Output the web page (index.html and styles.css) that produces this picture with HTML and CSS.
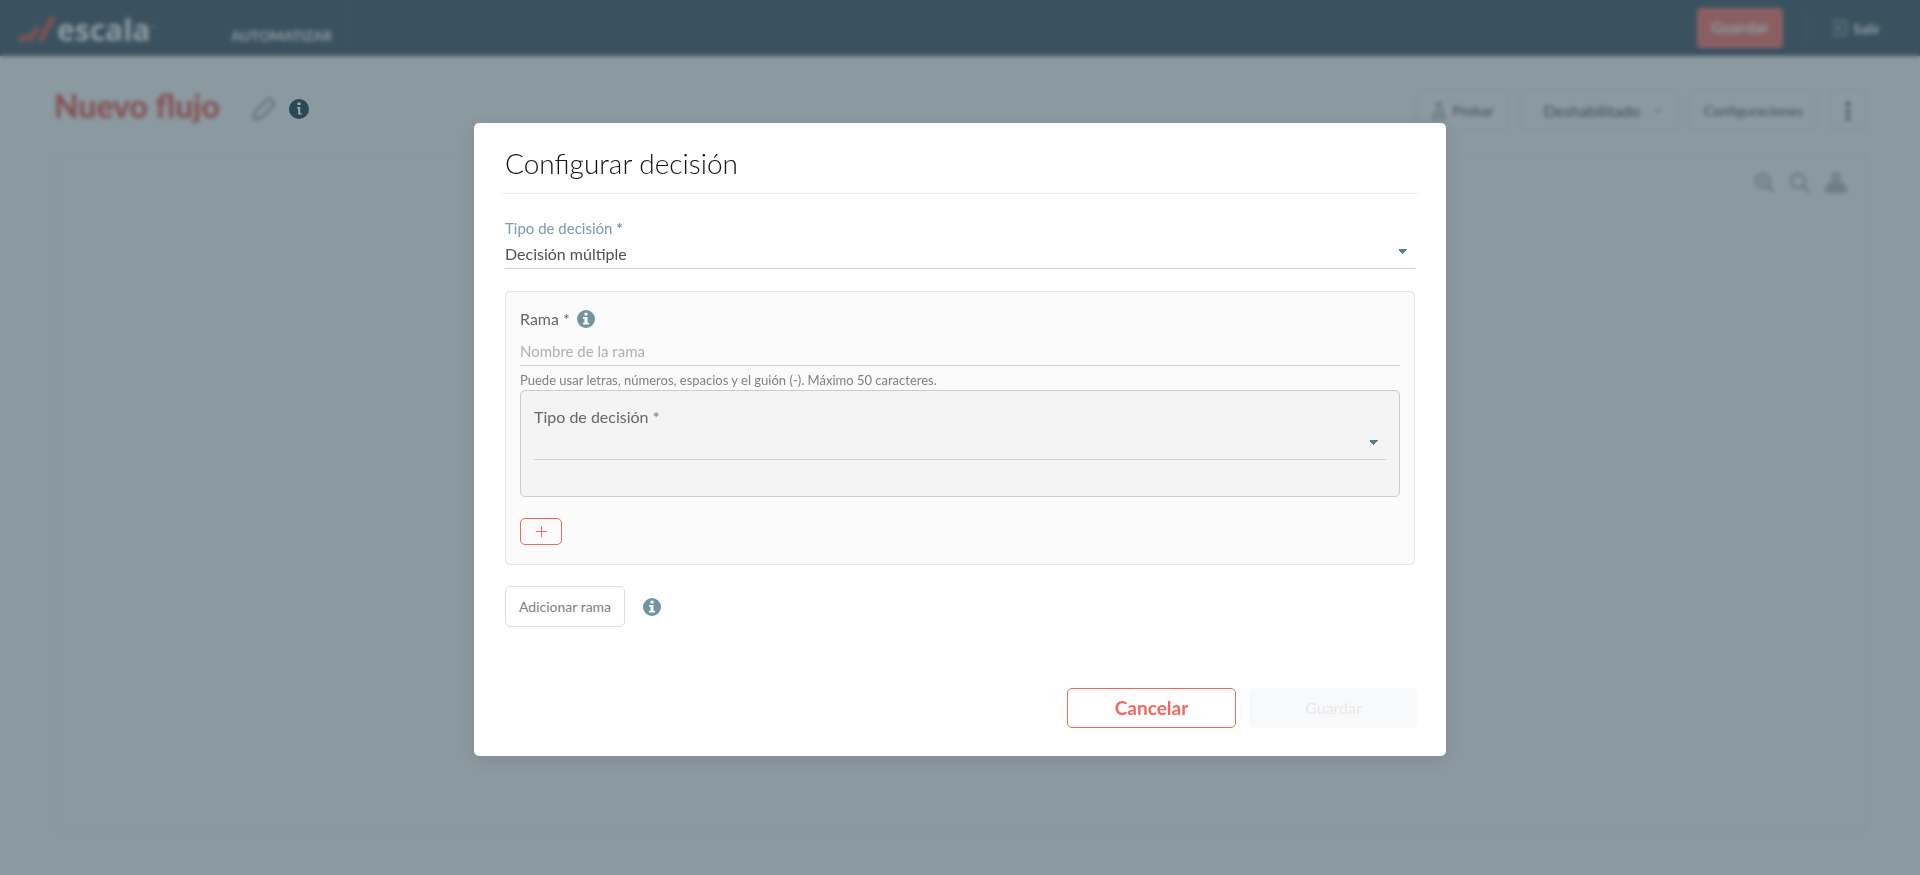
FILE: index.html
```html
<!DOCTYPE html>
<html lang="es">
<head>
<meta charset="utf-8">
<title>Escala - Automatizar</title>
<link rel="stylesheet" href="styles.css">
</head>
<body>
<header class="topbar">
  <a class="brand" href="#">
    <svg class="brand-mark" viewBox="0 0 40 28" aria-hidden="true"><path d="M2 25l6-5M12 25l9-14M23 25L36 1M8 22l3-3"/></svg>
    <span>escala</span><i class="brand-dot"></i>
  </a>
  <a class="nav-item" href="#">AUTOMATIZAR</a>
  <div class="topbar-actions">
    <button class="save" type="button">Guardar</button>
    <a class="exit" href="#">
      <svg viewBox="0 0 16 18" width="16" height="18" aria-hidden="true"><path d="M2 5V2h12v14H2v-3M1 9h8M6 6l3 3-3 3"/></svg>
      Salir
    </a>
  </div>
</header>
<main class="page">
  <div class="page-head">
    <h1>Nuevo flujo</h1>
    <button class="icon-btn" type="button" aria-label="Editar nombre">
      <svg viewBox="0 0 24 24" width="24" height="24" aria-hidden="true"><path d="M2 22l1-7L15 3q2-2 4 0l2 2q2 2 0 4L9 21z"/></svg>
    </button>
    <button class="info-top" type="button" aria-label="Información">
      <svg viewBox="0 0 20 20" width="20" height="20" aria-hidden="true"><circle cx="10" cy="10" r="10"/><path class="glyph" d="M8.500 3.500h3v2.500h-3zM8 8h3.200v6.200h1.500v1.400H9.200V9.300H8z"/></svg>
    </button>
    <div class="tools">
      <button class="tool" type="button">
        <svg viewBox="0 0 16 20" width="16" height="20" aria-hidden="true"><path d="M5 2h6M6 2v6L2 16q-1 2 1 2h10q2 0 1-2L10 8V2M4 13h8"/></svg>
        Probar
      </button>
      <button class="tool tool-state" type="button">Deshabilitado
        <svg viewBox="0 0 8 6" width="8" height="6" aria-hidden="true"><path d="M1 1l3 3 3-3"/></svg>
      </button>
      <button class="tool" type="button">Configuraciones</button>
      <button class="tool tool-more" type="button" aria-label="Más opciones">
        <svg viewBox="0 0 4 20" width="4" height="20" aria-hidden="true"><path d="M2 1v4M2 8v4M2 15v4"/></svg>
      </button>
    </div>
  </div>
  <section class="canvas">
    <svg viewBox="0 0 20 20" width="20" height="20" aria-hidden="true"><circle cx="8" cy="8" r="7"/><path d="M13 13l6 6M5 8h6M8 5v6"/></svg>
    <svg viewBox="0 0 20 20" width="20" height="20" aria-hidden="true"><circle cx="8" cy="8" r="7"/><path d="M13 13l6 6"/></svg>
    <svg viewBox="0 0 22 20" width="22" height="20" aria-hidden="true"><path d="M8 1h6v6H8zM11 7v4M4 14v-3h14v3M1 14h5v5H1zM8.500 14h5v5h-5zM16 14h5v5h-5zM11 11v3"/></svg>
  </section>
</main>

<div class="overlay">
  <form class="modal" role="dialog" aria-labelledby="dialog-title">
    <h2 id="dialog-title">Configurar decisión</h2>
    <div class="modal-body">
      <div class="field">
        <label class="label label-blue" for="type">Tipo de decisión <b>*</b></label>
        <select id="type" class="line-input"><option>Decisión múltiple</option></select>
      </div>
      <section class="branch">
        <div class="branch-head">
          <label class="label" for="branch">Rama *</label>
          <svg class="info" viewBox="0 0 18 18" aria-hidden="true"><circle cx="9" cy="9" r="9"/><path class="glyph" d="M7.500 2.800h3v2.700h-3zM6 7h4.500v5.800H12v1.700H6v-1.700h1.500V8.700H6z"/></svg>
        </div>
        <input id="branch" class="line-input" type="text" placeholder="Nombre de la rama">
        <p class="hint">Puede usar letras, números, espacios y el guión (-). Máximo 50 caracteres.</p>
        <div class="condition">
          <label class="label" for="condition">Tipo de decisión <b>*</b></label>
          <select id="condition" class="line-input"><option></option></select>
        </div>
        <button class="add" type="button" aria-label="Agregar condición">
          <svg viewBox="0 0 11 11" width="11" height="11" aria-hidden="true"><path d="M5.500 0v11M0 5.500h11"/></svg>
        </button>
      </section>
      <div class="branch-actions">
        <button class="add-branch" type="button">Adicionar rama</button>
        <svg class="info" viewBox="0 0 18 18" aria-hidden="true"><circle cx="9" cy="9" r="9"/><path class="glyph" d="M7.500 2.800h3v2.700h-3zM6 7h4.500v5.800H12v1.700H6v-1.700h1.500V8.700H6z"/></svg>
      </div>
    </div>
    <footer class="modal-foot">
      <button class="cancel" type="button">Cancelar</button>
      <button class="confirm" type="submit" disabled>Guardar</button>
    </footer>
  </form>
</div>
</body>
</html>
```
FILE: styles.css
```css
* { box-sizing: border-box; }
body {
  margin: 0;
  min-height: 100vh;
  display: flex;
  flex-direction: column;
  background: #fff;
  color: #555;
  font-family: Lato, "Open Sans", sans-serif;
  font-size: 16px;
}
button, input, select { font: inherit; color: inherit; margin: 0; }
button { cursor: pointer; }
a { color: inherit; text-decoration: none; }
h1, h2, p { margin: 0; }
svg { fill: none; stroke: currentColor; stroke-width: 2; flex: none; }

.topbar {
  height: 56px;
  display: flex;
  align-items: center;
  background: #5c707e;
  color: #fff;
}
.brand {
  display: flex;
  align-items: center;
  width: 231px;
  padding: 4px 0 0 17px;
  font: 700 30px/36px "Open Sans", sans-serif;
}
.brand-mark { width: 40px; height: 28px; color: #f07060; stroke-width: 5; }
.brand-dot { width: 3px; height: 3px; border-radius: 50%; background: #b9c4ca; margin: 0 0 8px 2px; }
.nav-item {
  align-self: stretch;
  padding: 26px 17px 0 0;
  border-right: 1px solid #687b88;
  font-size: 14px;
  line-height: 20px;
  font-weight: 700;
}
.topbar-actions { margin-left: auto; display: flex; align-items: center; padding-right: 40px; }
.save {
  width: 86px;
  height: 40px;
  padding: 0 0 4px;
  border: 0;
  border-radius: 4px;
  background: #ff8a80;
  font-weight: 700;
}
.exit {
  display: flex;
  align-items: center;
  gap: 5px;
  height: 30px;
  margin-left: 23px;
  padding-left: 25px;
  border-left: 1px solid #7d8e99;
  font-size: 14px;
  font-weight: 700;
}
.exit svg { stroke-width: 1; }

.page { flex: 1; display: flex; flex-direction: column; padding: 34px 53px 43px 54px; }
.page-head { display: flex; align-items: center; min-height: 41px; color: #808080; }
.page-head h1 { font-size: 32px; line-height: 40px; font-weight: 700; color: #f0685e; margin-top: -10px; }
.icon-btn { display: flex; padding: 0; margin: 0 0 4px 32px; border: 0; background: none; color: #a0a0a0; }
.info-top {
  position: relative;
  z-index: 2;
  display: flex;
  padding: 0;
  margin: 0 0 4px 13px;
  border: 0;
  background: none;
}
.info-top circle { fill: #2a4858; stroke: none; }
.info-top .glyph { fill: #9fadb3; stroke: none; }
.tools { margin-left: auto; display: flex; gap: 11px; }
.tool {
  display: flex;
  align-items: center;
  justify-content: center;
  gap: 5px;
  height: 41px;
  padding: 0 14px;
  border: 1px solid #e7e7ee;
  border-radius: 5px;
  background: #fff;
  color: #707070;
  font-size: 14px;
}
.tool svg { stroke-width: 1; }
.tool-state { gap: 14px; padding: 0 15px 0 23px; font-size: 16px; }
.tool.tool-more { width: 38px; }
.tool-more svg { stroke-width: 4; }
.canvas {
  flex: 1;
  margin-top: 23px;
  padding: 17px 18px;
  border: 2px solid #f5f5f5;
  display: flex;
  justify-content: flex-end;
  align-items: flex-start;
  gap: 15px;
  color: #b0b0b0;
}

.overlay {
  position: fixed;
  inset: 0;
  z-index: 1;
  display: flex;
  align-items: center;
  justify-content: center;
  padding-top: 4px;
  background: rgba(24, 52, 66, .5);
  backdrop-filter: blur(2px);
}
.modal {
  width: 92%;
  max-width: 972px;
  padding: 21px 28px 28px;
  border-radius: 5px;
  background: #fff;
  box-shadow: 0 4px 16px rgba(0, 0, 0, .1);
}
.modal h2 {
  padding: 0 3px 11px;
  border-bottom: 1px solid #eee;
  color: #111;
  font-size: 28px;
  line-height: 38px;
  font-weight: 300;
}
.modal-body { padding: 24px 3px 0; }
.field { display: flex; flex-direction: column; }
.label { display: block; line-height: 20px; color: #666; }
.label b { color: #7393a3; }
.label-blue { color: #7b9aaa; font-size: 15px; }
.line-input {
  display: block;
  width: 100%;
  height: 31px;
  padding: 4px 0;
  border: 0;
  border-bottom: 1px solid #c3d5de;
  border-radius: 0;
  outline: 0;
  background: transparent;
  color: #505050;
}
select.line-input {
  appearance: none;
  background: conic-gradient(from -45deg at 50% 100%, #5f7d8e 90deg, transparent 0) right 8px top 11px / 8px 5px no-repeat;
}
input.line-input { margin-top: 7px; height: 30px; font-size: 15px; }
.line-input::placeholder { color: #b0b0b0; }
.branch {
  margin-top: 22px;
  padding: 17px 14px 19px;
  border: 1px solid #e4e4e4;
  border-radius: 5px;
  background: #fbfbfb;
}
.branch-head { display: flex; align-items: center; gap: 7px; }
.info { width: 18px; height: 18px; }
.info circle { fill: #7393a3; stroke: none; }
.info .glyph { fill: #fff; stroke: none; }
.hint { padding: 6px 0 1px; font-size: 13px; line-height: 17px; color: #808080; }
.condition {
  padding: 16px 13px 36px;
  border: 1px solid #ccc;
  border-radius: 5px;
  background: #f4f4f4;
}
.condition .line-input { margin-top: 2px; }
.add {
  display: flex;
  align-items: center;
  justify-content: center;
  width: 42px;
  height: 27px;
  margin-top: 21px;
  border: 1px solid #f0685e;
  border-radius: 5px;
  background: transparent;
  color: #f0685e;
}
.add svg { stroke-width: 1; }
.branch-actions { display: flex; align-items: center; gap: 18px; margin-top: 21px; }
.add-branch {
  height: 41px;
  padding: 0 13px;
  border: 1px solid #ddd;
  border-radius: 5px;
  background: #fff;
  color: #808080;
  font-size: 14px;
}
.modal-foot { display: flex; justify-content: flex-end; gap: 13px; margin-top: 61px; }
.cancel, .confirm { width: 169px; height: 40px; padding: 0 0 2px; border-radius: 5px; }
.cancel { border: 1px solid #f0685e; background: #fff; color: #f0685e; font-size: 19px; font-weight: 700; }
.confirm { border: 0; background: #f8f9fb; color: #e8e8e8; }
```
